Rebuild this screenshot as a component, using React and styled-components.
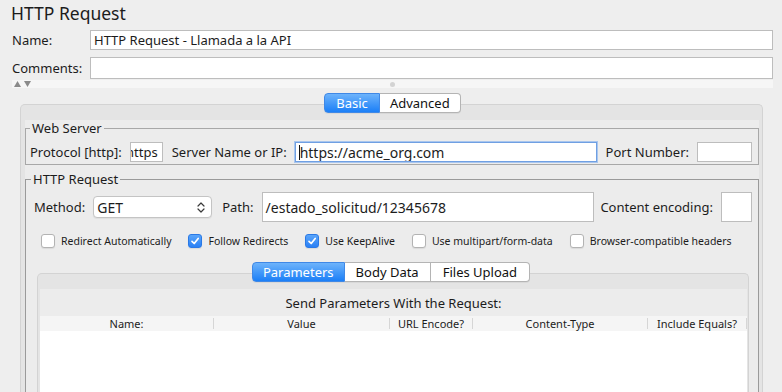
import React from "react";
import styled, { createGlobalStyle } from "styled-components";

const GlobalStyle = createGlobalStyle`
  html, body {
    margin: 0;
    padding: 0;
    background: #eeeeee;
    overflow: hidden;
  }
  body {
    font-family: "Noto Sans", "DejaVu Sans", sans-serif;
    color: #1c1c1c;
  }
`;

const Page = styled.div`
  width: 782px;
  height: 392px;
  overflow: hidden;
  padding: 0 9px 0 12px;
  box-sizing: border-box;
`;

const Title = styled.h1`
  margin: 2px 0 0 -1px;
  font-size: 17.5px;
  font-weight: 400;
  line-height: 22px;
`;

const FormRow = styled.div`
  display: flex;
  align-items: center;
  margin-top: ${(p) => p.$top}px;
`;

const FormLabel = styled.label`
  width: 78px;
  font-size: 13px;
`;

const TextBox = styled.div`
  flex: ${(p) => (p.$width ? "none" : "1")};
  width: ${(p) => (p.$width ? `${p.$width}px` : "auto")};
  height: ${(p) => p.$height || 20}px;
  box-sizing: border-box;
  background: #fff;
  border: 1px solid ${(p) => (p.$focus ? "#6f9fe2" : "#bdbdbd")};
  box-shadow: ${(p) => (p.$focus ? "0 0 0 1px #a9c6ee" : "none")};
  display: flex;
  align-items: center;
  justify-content: ${(p) => (p.$clip ? "flex-end" : "flex-start")};
  padding: 0 ${(p) => (p.$clip ? 4 : 3)}px;
  font-size: ${(p) => p.$size || 13}px;
  white-space: nowrap;
  overflow: hidden;
`;

const Caret = styled.span`
  width: 1px;
  height: 15px;
  background: #111;
`;

const ResizeStrip = styled.div`
  margin-top: 1px;
  height: 8px;
  background: #f6f6f6;
  display: grid;
  grid-template-columns: 1fr auto 1fr;
  align-items: center;
`;

const Arrows = styled.div`
  display: flex;
  gap: 3px;
  padding-left: 2px;
`;

const Grip = styled.span`
  width: 5px;
  height: 5px;
  border-radius: 50%;
  background: #d3d3d3;
`;

const TabBar = styled.div`
  display: flex;
  justify-content: center;
  position: relative;
  z-index: 1;
  margin-top: ${(p) => p.$top || 0}px;
`;

const Tab = styled.div`
  height: 20px;
  box-sizing: border-box;
  padding: 0 ${(p) => p.$pad || 11}px;
  display: flex;
  align-items: center;
  font-size: 13px;
  background: ${(p) =>
    p.$active ? "linear-gradient(#6db3fb, #1b7ff7)" : "#ffffff"};
  color: ${(p) => (p.$active ? "#fff" : "#111")};
  border: 1px solid ${(p) => (p.$active ? "#3f88e6" : "#b4b4b4")};
  border-left-width: ${(p) => (p.$first ? 1 : 0)}px;
  border-radius: ${(p) =>
    p.$first ? "4px 0 0 4px" : p.$last ? "0 4px 4px 0" : "0"};
  box-shadow: 0 1px 0 rgba(0, 0, 0, 0.05);
`;

const Panel = styled.div`
  margin: -9px ${(p) => p.$right}px 0 ${(p) => p.$left}px;
  border: 1px solid #d3d3d3;
  border-bottom: none;
  border-radius: 5px 5px 0 0;
  background: #e4e4e4;
  padding: 15px ${(p) => p.$padR}px 0 ${(p) => p.$padL}px;
  height: ${(p) => p.$height}px;
`;

const PanelBody = styled.div`
  background: #ececec;
  height: 100%;
`;

const Group = styled.fieldset`
  margin: ${(p) => p.$top || 0}px 0 0 0;
  padding: 0 6px 2px 4px;
  border: 1px solid ${(p) => (p.$open ? "#9a9a9a" : "#a8a8a8")};
  min-width: 0;
  ${(p) => (p.$open ? "border-bottom: none; height: 240px;" : "")}
`;

const Legend = styled.legend`
  padding: 0 2px;
  margin-left: ${(p) => p.$shift || 0}px;
  font-size: 13px;
  line-height: 16px;
`;

const FieldRow = styled.div`
  display: flex;
  align-items: center;
  gap: 8px;
  margin-top: ${(p) => p.$top}px;
  padding-left: ${(p) => p.$indent || 0}px;
  height: ${(p) => p.$height}px;
`;

const FieldLabel = styled.span`
  font-size: 13px;
  white-space: nowrap;
  margin-left: ${(p) => p.$gapBefore || 0}px;
`;

const Select = styled.div`
  width: 119px;
  height: 22px;
  box-sizing: border-box;
  background: #fff;
  border: 1px solid #c4c4c4;
  border-radius: 4px;
  display: flex;
  align-items: center;
  justify-content: space-between;
  padding: 0 6px 0 3px;
  font-size: 14px;
  box-shadow: 0 1px 1px rgba(0, 0, 0, 0.06);
`;

const CheckRow = styled.div`
  display: flex;
  align-items: center;
  gap: 17px;
  margin-top: 12px;
  padding-left: 11px;
  height: 14px;
`;

const CheckItem = styled.label`
  display: flex;
  align-items: center;
  gap: 6px;
  font-size: 10.5px;
  white-space: nowrap;
`;

const Box = styled.span`
  width: 14px;
  height: 14px;
  box-sizing: border-box;
  border-radius: 3px;
  border: 1px solid ${(p) => (p.$checked ? "#2a79e6" : "#b3b3b3")};
  background: ${(p) =>
    p.$checked ? "linear-gradient(#5aa5fa, #2a80f5)" : "#fff"};
  display: flex;
  align-items: center;
  justify-content: center;
  box-shadow: 0 1px 1px rgba(0, 0, 0, 0.08);
`;

const Caption = styled.div`
  height: 27px;
  display: flex;
  align-items: center;
  justify-content: center;
  font-size: 13px;
`;

const TableHead = styled.div`
  display: grid;
  grid-template-columns: 174px 176px 83px 175px 99px;
  background: #f5f5f5;
  padding: 2px 0;
  height: 15px;
  box-sizing: border-box;
`;

const HeadCell = styled.div`
  font-size: 11px;
  line-height: 11px;
  text-align: center;
  border-right: 1px solid #d6d6d6;
  white-space: nowrap;
`;

const TableBody = styled.div`
  background: #fff;
  height: 80px;
`;

const Check = () => (
  <svg width="10" height="10" viewBox="0 0 10 10">
    <path
      d="M2 5.3 L4.2 7.5 L8.2 2.4"
      fill="none"
      stroke="#fff"
      strokeWidth="1.7"
      strokeLinecap="round"
      strokeLinejoin="round"
    />
  </svg>
);

const Chevrons = () => (
  <svg width="8" height="13" viewBox="0 0 8 13">
    <path
      d="M1 5 L4 2 L7 5 M1 8 L4 11 L7 8"
      fill="none"
      stroke="#3a3a3a"
      strokeWidth="1.2"
      strokeLinecap="round"
      strokeLinejoin="round"
    />
  </svg>
);

const Triangle = ({ down }) => (
  <svg width="7" height="6" viewBox="0 0 7 6">
    <path d={down ? "M0 0 H7 L3.5 6 Z" : "M0 6 H7 L3.5 0 Z"} fill="#8a8a8a" />
  </svg>
);

const checks = [
  { label: "Redirect Automatically", checked: false },
  { label: "Follow Redirects", checked: true },
  { label: "Use KeepAlive", checked: true },
  { label: "Use multipart/form-data", checked: false },
  { label: "Browser-compatible headers", checked: false },
];

const columns = ["Name:", "Value", "URL Encode?", "Content-Type", "Include Equals?"];

export default function App() {
  return (
    <>
      <GlobalStyle />
      <Page>
        <Title>HTTP Request</Title>
        <FormRow $top={6}>
          <FormLabel>Name:</FormLabel>
          <TextBox>HTTP Request - Llamada a la API</TextBox>
        </FormRow>
        <FormRow $top={7}>
          <FormLabel>Comments:</FormLabel>
          <TextBox $height={22} />
        </FormRow>
        <ResizeStrip>
          <Arrows>
            <Triangle />
            <Triangle down />
          </Arrows>
          <Grip />
          <span />
        </ResizeStrip>

        <TabBar $top={5}>
          <Tab $active $first>Basic</Tab>
          <Tab $last $pad={10}>Advanced</Tab>
        </TabBar>
        <Panel $left={8} $right={10} $padL={4} $padR={3} $height={300}>
          <PanelBody>
            <Group>
              <Legend $shift={0}>Web Server</Legend>
              <FieldRow $top={6} $height={20}>
                <FieldLabel>Protocol [http]:</FieldLabel>
                <TextBox $width={33} $clip>https</TextBox>
                <FieldLabel $gapBefore={1}>Server Name or IP:</FieldLabel>
                <TextBox $focus $size={14}>
                  <Caret />
                  https://acme_org.com
                </TextBox>
                <FieldLabel $gapBefore={1}>Port Number:</FieldLabel>
                <TextBox $width={55} />
              </FieldRow>
            </Group>

            <Group $top={6} $open>
              <Legend $shift={1}>HTTP Request</Legend>
              <FieldRow $top={5} $height={30} $indent={4}>
                <FieldLabel>Method:</FieldLabel>
                <Select>
                  GET
                  <Chevrons />
                </Select>
                <FieldLabel $gapBefore={2}>Path:</FieldLabel>
                <TextBox $height={30} $size={14}>
                  /estado_solicitud/12345678
                </TextBox>
                <FieldLabel $gapBefore={-2}>Content encoding:</FieldLabel>
                <TextBox $width={31} $height={30} />
              </FieldRow>

              <CheckRow>
                {checks.map((c) => (
                  <CheckItem key={c.label}>
                    <Box $checked={c.checked}>{c.checked && <Check />}</Box>
                    {c.label}
                  </CheckItem>
                ))}
              </CheckRow>

              <TabBar $top={14}>
                <Tab $active $first $pad={10}>Parameters</Tab>
                <Tab>Body Data</Tab>
                <Tab $last $pad={12}>Files Upload</Tab>
              </TabBar>
              <Panel $left={7} $right={3} $padL={2} $padR={1} $height={140}>
                <PanelBody>
                  <Caption>Send Parameters With the Request:</Caption>
                  <TableHead>
                    {columns.map((c) => (
                      <HeadCell key={c}>{c}</HeadCell>
                    ))}
                  </TableHead>
                  <TableBody />
                </PanelBody>
              </Panel>
            </Group>
          </PanelBody>
        </Panel>
      </Page>
    </>
  );
}
